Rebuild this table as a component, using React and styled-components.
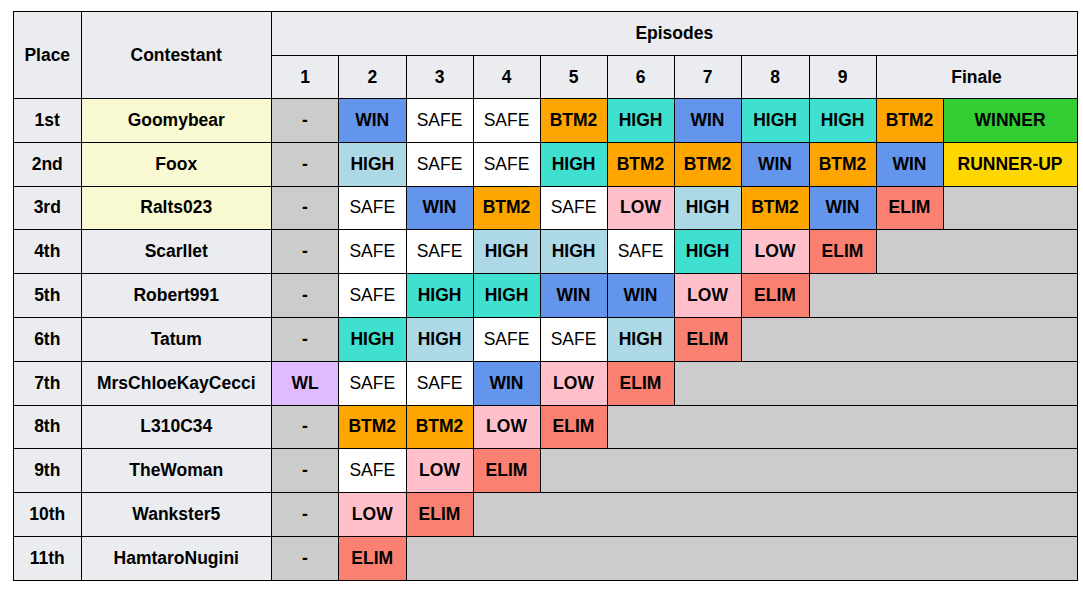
import React from "react";
import styled, { createGlobalStyle } from "styled-components";

const tones = {
  head: "#eaecf0",
  top: "#fafad2",
  none: "#cccccc",
  safe: "#ffffff",
  win: "#6495ed",
  high: "#40e0d0",
  hi: "#add8e6",
  btm: "#ffa500",
  low: "#ffc0cb",
  elim: "#fa8072",
  wl: "#e0bbff",
  winner: "#32cd32",
  runner: "#ffd700",
};

const labels = {
  none: "-",
  safe: "SAFE",
  win: "WIN",
  high: "HIGH",
  hi: "HIGH",
  btm: "BTM2",
  low: "LOW",
  elim: "ELIM",
  wl: "WL",
  winner: "WINNER",
  runner: "RUNNER-UP",
};

const contestants = [
  { place: "1st", name: "Goomybear", top: true, results: ["none", "win", "safe", "safe", "btm", "high", "win", "high", "high", "btm", "winner"] },
  { place: "2nd", name: "Foox", top: true, results: ["none", "hi", "safe", "safe", "high", "btm", "btm", "win", "btm", "win", "runner"] },
  { place: "3rd", name: "Ralts023", top: true, results: ["none", "safe", "win", "btm", "safe", "low", "hi", "btm", "win", "elim"] },
  { place: "4th", name: "Scarllet", results: ["none", "safe", "safe", "hi", "hi", "safe", "high", "low", "elim"] },
  { place: "5th", name: "Robert991", results: ["none", "safe", "high", "high", "win", "win", "low", "elim"] },
  { place: "6th", name: "Tatum", results: ["none", "high", "hi", "safe", "safe", "hi", "elim"] },
  { place: "7th", name: "MrsChloeKayCecci", results: ["wl", "safe", "safe", "win", "low", "elim"] },
  { place: "8th", name: "L310C34", results: ["none", "btm", "btm", "low", "elim"] },
  { place: "9th", name: "TheWoman", results: ["none", "safe", "low", "elim"] },
  { place: "10th", name: "Wankster5", results: ["none", "low", "elim"] },
  { place: "11th", name: "HamtaroNugini", results: ["none", "elim"] },
];

const colWidths = [67.5, 190.5, 67, 67.5, 67, 67, 67, 67, 67, 68, 67, 67, 134];
const TOTAL_COLS = 11;

function App() {
  return (
    <>
      <GlobalStyle />
      <Page>
        <Table>
          <colgroup>
            {colWidths.map((w, i) => (
              <col key={i} style={{ width: w }} />
            ))}
          </colgroup>
          <thead>
            <HeadRow $h={44}>
              <HeadCell rowSpan={2}>Place</HeadCell>
              <HeadCell rowSpan={2}>Contestant</HeadCell>
              <HeadCell colSpan={11}>Episodes</HeadCell>
            </HeadRow>
            <HeadRow $h={43}>
              {[1, 2, 3, 4, 5, 6, 7, 8, 9].map((n) => (
                <HeadCell key={n}>{n}</HeadCell>
              ))}
              <HeadCell colSpan={2}>Finale</HeadCell>
            </HeadRow>
          </thead>
          <tbody>
            {contestants.map((c) => {
              const left = TOTAL_COLS - c.results.length;
              return (
                <Row key={c.place}>
                  <HeadCell>{c.place}</HeadCell>
                  <NameCell $top={c.top}>{c.name}</NameCell>
                  {c.results.map((r, i) => (
                    <Cell key={i} $tone={r}>
                      {labels[r]}
                    </Cell>
                  ))}
                  {left > 0 && <Cell $tone="none" colSpan={left} />}
                </Row>
              );
            })}
          </tbody>
        </Table>
      </Page>
    </>
  );
}

const GlobalStyle = createGlobalStyle`
  body {
    margin: 0;
    background: #ffffff;
    font-family: "Liberation Sans", Arial, sans-serif;
  }
`;

const Page = styled.div`
  padding: 11px 0 0 13px;
`;

const Table = styled.table`
  width: 1064px;
  table-layout: fixed;
  border-collapse: collapse;
  font-size: 17.5px;
  color: #000000;
`;

const HeadRow = styled.tr`
  height: ${(p) => p.$h}px;
`;

const Row = styled.tr`
  height: 43.8px;
`;

const HeadCell = styled.th`
  border: 1px solid #000000;
  background: ${tones.head};
  font-weight: bold;
  text-align: center;
  padding: 0;
`;

const NameCell = styled.td`
  border: 1px solid #000000;
  background: ${(p) => (p.$top ? tones.top : tones.head)};
  font-weight: bold;
  text-align: center;
  padding: 0;
`;

const Cell = styled.td`
  border: 1px solid #000000;
  background: ${(p) => tones[p.$tone]};
  font-weight: ${(p) => (p.$tone === "safe" ? "normal" : "bold")};
  text-align: center;
  padding: 0;
`;

export default App;
